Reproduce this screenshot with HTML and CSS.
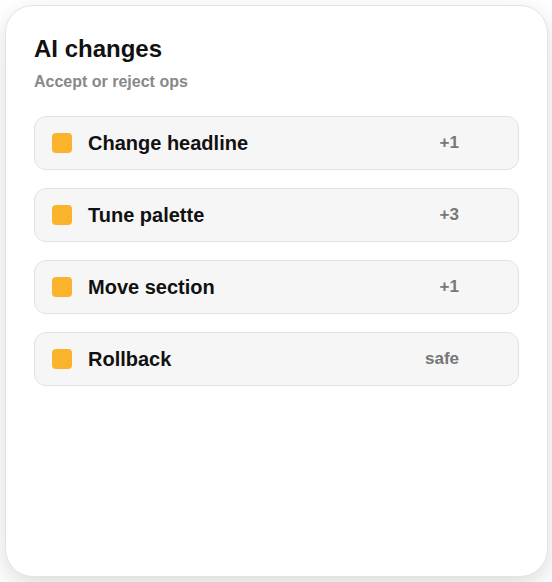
FILE: index.html
```html
<!DOCTYPE html>
<html lang="en">
<head>
<meta charset="utf-8">
<title>AI changes</title>
<link rel="stylesheet" href="styles.css">
</head>
<body>
  <section class="panel">
    <header class="panel-head">
      <h1 class="panel-title">AI changes</h1>
      <p class="panel-sub">Accept or reject ops</p>
    </header>
    <ul class="ops">
      <li class="op"><span class="op-dot"></span><span class="op-label">Change headline</span><span class="op-meta">+1</span></li>
      <li class="op"><span class="op-dot"></span><span class="op-label">Tune palette</span><span class="op-meta">+3</span></li>
      <li class="op"><span class="op-dot"></span><span class="op-label">Move section</span><span class="op-meta">+1</span></li>
      <li class="op"><span class="op-dot"></span><span class="op-label">Rollback</span><span class="op-meta">safe</span></li>
    </ul>
  </section>
</body>
</html>
```
FILE: styles.css
```css
html, body {
  margin: 0;
  padding: 0;
  background: #ffffff;
}

body {
  padding: 5px;
  font-family: "Liberation Sans", Arial, sans-serif;
  color: #111111;
}

.panel {
  box-sizing: border-box;
  width: 543px;
  height: 572px;
  background: #ffffff;
  border: 1px solid #e3e3e3;
  border-radius: 28px;
  box-shadow: 0 8px 24px rgba(0, 0, 0, 0.14);
  padding: 29px 28px 28px 28px;
}

.panel-title {
  margin: 0;
  font-size: 24px;
  line-height: 28px;
  font-weight: 700;
  color: #111111;
}

.panel-sub {
  margin: 9px 0 0 0;
  font-size: 16px;
  line-height: 20px;
  font-weight: 700;
  color: #888888;
}

.ops {
  list-style: none;
  margin: 24px 0 0 0;
  padding: 0;
  display: flex;
  flex-direction: column;
  gap: 18px;
}

.op {
  box-sizing: border-box;
  height: 54px;
  display: flex;
  align-items: center;
  padding: 0 59px 0 17px;
  background: #f6f6f6;
  border: 1px solid #e2e2e2;
  border-radius: 12px;
}

.op-dot {
  width: 20px;
  height: 20px;
  border-radius: 4px;
  background: #fbb32b;
  flex: none;
}

.op-label {
  margin-left: 16px;
  flex: 1;
  font-size: 20px;
  font-weight: 700;
  color: #111111;
}

.op-meta {
  font-size: 17px;
  font-weight: 700;
  color: #777777;
}
```
